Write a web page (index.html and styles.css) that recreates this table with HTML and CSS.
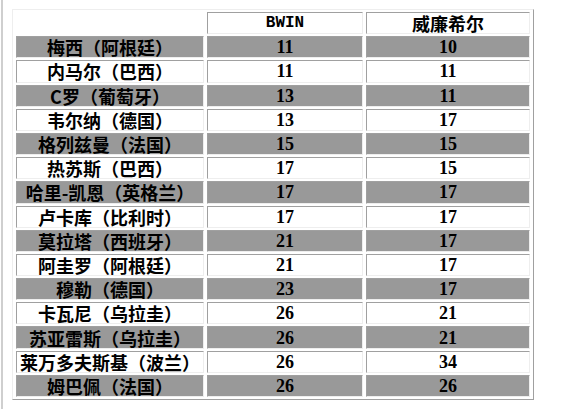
FILE: index.html
```html
<!DOCTYPE html>
<html>
<head>
<meta charset="utf-8">
<link rel="stylesheet" href="styles.css">
</head>
<body>
<div class="frame">
<table class="odds">
<tr class="head"><td class="empty"></td><td class="en">BWIN</td><td class="cn">威廉希尔</td></tr>
<tr class="g"><td>梅西（阿根廷）</td><td>11</td><td>10</td></tr>
<tr class="w"><td>内马尔（巴西）</td><td>11</td><td>11</td></tr>
<tr class="g"><td>C罗（葡萄牙）</td><td>13</td><td>11</td></tr>
<tr class="w"><td>韦尔纳（德国）</td><td>13</td><td>17</td></tr>
<tr class="g"><td>格列兹曼（法国）</td><td>15</td><td>15</td></tr>
<tr class="w"><td>热苏斯（巴西）</td><td>17</td><td>15</td></tr>
<tr class="g"><td>哈里-凯恩（英格兰）</td><td>17</td><td>17</td></tr>
<tr class="w"><td>卢卡库（比利时）</td><td>17</td><td>17</td></tr>
<tr class="g"><td>莫拉塔（西班牙）</td><td>21</td><td>17</td></tr>
<tr class="w"><td>阿圭罗（阿根廷）</td><td>21</td><td>17</td></tr>
<tr class="g"><td>穆勒（德国）</td><td>23</td><td>17</td></tr>
<tr class="w"><td>卡瓦尼（乌拉圭）</td><td>26</td><td>21</td></tr>
<tr class="g"><td>苏亚雷斯（乌拉圭）</td><td>26</td><td>21</td></tr>
<tr class="w"><td>莱万多夫斯基（波兰）</td><td>26</td><td>34</td></tr>
<tr class="g"><td>姆巴佩（法国）</td><td>26</td><td>26</td></tr>
</table>
</div>
</body>
</html>
```

FILE: styles.css
```css
html, body {
  margin: 0;
  padding: 0;
  background: #ffffff;
}
body {
  padding-left: 1px;
  height: 409px;
  box-sizing: border-box;
}
.frame {
  border-left: 2px solid #cfcfcf;
  padding: 9px 0 0 9px;
  height: 400px;
}
.odds {
  border-collapse: separate;
  border-spacing: 3px 2px;
  border: 1px solid;
  border-color: #eeeeee #a0a0a0 #a0a0a0 #eeeeee;
  width: 522px;
  font-family: "Noto Sans CJK SC", sans-serif;
  font-weight: bold;
  font-size: 18px;
  color: #000;
}
.odds td {
  border: 1px solid;
  border-color: #a0a0a0 #eeeeee #eeeeee #a0a0a0;
  padding: 0;
  height: 20.2px;
  line-height: 20px;
  text-align: center;
  white-space: nowrap;
}
.odds td:nth-child(1) { width: 186px; }
.odds td:nth-child(2) { width: 154px; }
.odds td:nth-child(3) { width: 162px; }
.odds tr td:nth-child(n+2) {
  font-family: "Liberation Serif", serif;
  font-size: 18px;
}
.odds .head td.en {
  font-family: "Liberation Mono", monospace;
  font-weight: bold;
  font-size: 16px;
}
.odds .head td.cn {
  font-family: "Noto Sans CJK SC", sans-serif;
}
.odds .head td.empty {
  border: none;
}
.odds tr.g td {
  background: #999999;
}
.odds tr.w td {
  background: #ffffff;
}
```
